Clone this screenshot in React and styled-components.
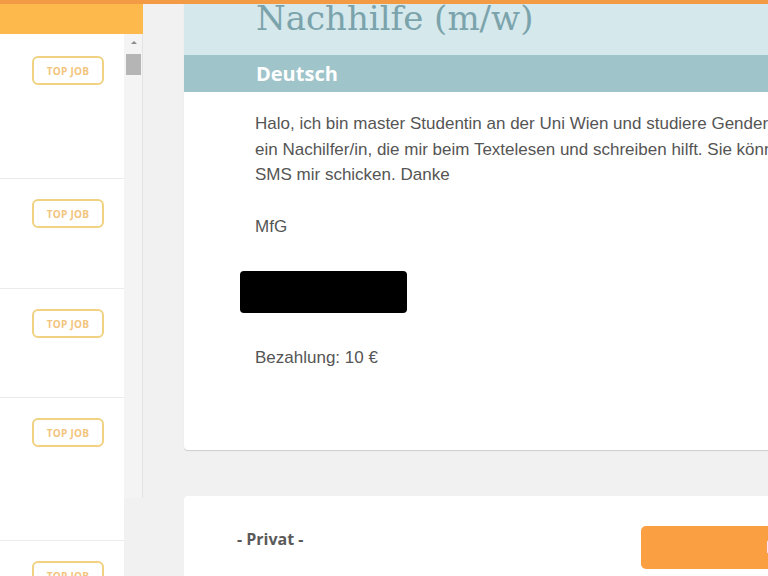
import styled, { createGlobalStyle } from "styled-components";

const GlobalStyle = createGlobalStyle`
  html, body {
    margin: 0;
    padding: 0;
    background: #f1f1f1;
    overflow: hidden;
    font-family: "Liberation Sans", Arial, sans-serif;
  }
`;

const rows = [144, 110, 109, 143, 110];

function App() {
  return (
    <Page>
      <GlobalStyle />
      <TopStripe />
      <Layout>
        <Sidebar>
          <SideHeader />
          <SideBody>
            <List>
              {rows.map((h, i) => (
                <Row key={i} $height={h} $first={i === 0}>
                  <Badge>TOP JOB</Badge>
                </Row>
              ))}
            </List>
            <Track>
              <Arrow />
              <Thumb />
            </Track>
          </SideBody>
        </Sidebar>
        <Main>
          <Card>
            <TitleBar>
              <Title>Nachhilfe (m/w)</Title>
            </TitleBar>
            <SubjectBar>Deutsch</SubjectBar>
            <CardBody>
              <Text>
                Halo, ich bin master Studentin an der Uni Wien und studiere Gender Studies. Ich suche
                <br />
                ein Nachilfer/in, die mir beim Textelesen und schreiben hilft. Sie können mich anrufen oder
                <br />
                SMS mir schicken. Danke
              </Text>
              <Text>MfG</Text>
              <Redacted />
              <Text>Bezahlung: 10 €</Text>
            </CardBody>
          </Card>
          <ContactCard>
            <Private>- Privat -</Private>
            <ContactButton>Kontakt</ContactButton>
          </ContactCard>
        </Main>
      </Layout>
    </Page>
  );
}

const Page = styled.div`
  display: flex;
  flex-direction: column;
  height: 576px;
  overflow: hidden;
`;

const TopStripe = styled.div`
  height: 4px;
  background: #f39a44;
  flex: 0 0 auto;
`;

const Layout = styled.div`
  display: flex;
  flex: 1;
  min-height: 0;
`;

const Sidebar = styled.div`
  width: 143px;
  flex: 0 0 auto;
  display: flex;
  flex-direction: column;
`;

const SideHeader = styled.div`
  height: 30px;
  background: #fdb94b;
`;

const SideBody = styled.div`
  display: flex;
  flex: 1;
  min-height: 0;
  align-items: flex-start;
`;

const List = styled.div`
  width: 124px;
  height: 542px;
  background: #ffffff;
  overflow: hidden;
`;

const Row = styled.div`
  height: ${(p) => p.$height}px;
  box-sizing: border-box;
  border-top: ${(p) => (p.$first ? "none" : "1px solid #ececec")};
  display: flex;
  justify-content: flex-end;
  align-items: flex-start;
  padding: ${(p) => (p.$first ? "22px" : "20px")} 20px 0 0;
`;

const Badge = styled.div`
  width: 72px;
  height: 29px;
  box-sizing: border-box;
  border: 2px solid #f1d283;
  border-radius: 6px;
  display: flex;
  align-items: center;
  justify-content: center;
  font-family: "Open Sans", sans-serif;
  font-weight: 700;
  font-size: 10px;
  letter-spacing: 0.3px;
  color: #f2c47c;
`;

const Track = styled.div`
  width: 19px;
  height: 464px;
  box-sizing: border-box;
  background: #f4f4f4;
  border-right: 1px solid #e4e4e4;
  display: flex;
  flex-direction: column;
  align-items: center;
  padding-top: 7px;
`;

const Arrow = styled.div`
  width: 0;
  height: 0;
  border-left: 3px solid transparent;
  border-right: 3px solid transparent;
  border-bottom: 3px solid #8a8a8a;
  margin-left: 1px;
`;

const Thumb = styled.div`
  width: 15px;
  height: 21px;
  background: #b5b5b5;
  margin-top: 10px;
  margin-left: 1px;
`;

const Main = styled.div`
  margin-left: 41px;
  width: 640px;
  flex: 0 0 auto;
  display: flex;
  flex-direction: column;
  gap: 46px;
`;

const Card = styled.div`
  background: #ffffff;
  border-radius: 0 0 4px 4px;
  box-shadow: 0 1px 1px rgba(0, 0, 0, 0.15);
  height: 446px;
  flex: 0 0 auto;
  display: flex;
  flex-direction: column;
`;

const TitleBar = styled.div`
  height: 51px;
  background: #d5e8eb;
  overflow: hidden;
  padding-left: 72px;
`;

const Title = styled.h1`
  margin: -7px 0 0;
  font-family: "DejaVu Serif", serif;
  font-weight: 400;
  font-size: 34px;
  line-height: 42px;
  color: #7ba3ab;
  white-space: nowrap;
`;

const SubjectBar = styled.div`
  height: 37px;
  background: #9fc4ca;
  color: #ffffff;
  font-family: "Open Sans", sans-serif;
  font-weight: 700;
  font-size: 20px;
  line-height: 37px;
  padding-left: 72px;
`;

const CardBody = styled.div`
  padding: 19px 0 0 71px;
  display: flex;
  flex-direction: column;
`;

const Text = styled.p`
  margin: 0 0 26px;
  font-size: 17px;
  line-height: 25.5px;
  color: #555555;
  white-space: nowrap;
`;

const Redacted = styled.div`
  width: 167px;
  height: 42px;
  background: #000000;
  border-radius: 4px;
  margin: 6px 0 32px -15px;
`;

const ContactCard = styled.div`
  background: #ffffff;
  border-radius: 4px 4px 0 0;
  height: 120px;
  flex: 0 0 auto;
  display: grid;
  grid-template-columns: 404px auto;
  align-items: start;
  padding: 30px 0 0 53px;
`;

const Private = styled.div`
  font-family: "Open Sans", sans-serif;
  font-weight: 700;
  font-size: 16px;
  color: #5a5a5a;
  margin-top: 2px;
`;

const ContactButton = styled.div`
  width: 150px;
  height: 43px;
  background: #fba042;
  border-radius: 5px;
  color: #ffffff;
  font-family: "Open Sans", sans-serif;
  font-weight: 700;
  font-size: 16px;
  line-height: 43px;
  padding-left: 125px;
`;

export default App;
